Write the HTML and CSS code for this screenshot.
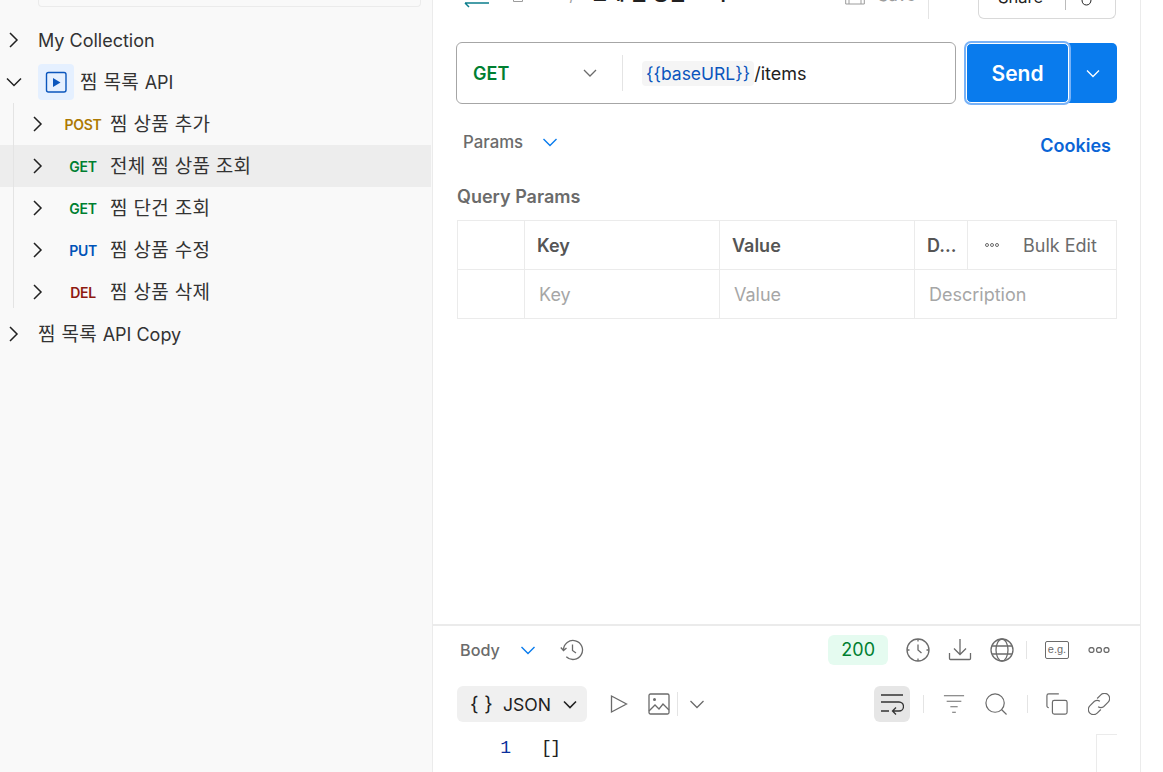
FILE: index.html
```html
<!DOCTYPE html>
<html lang="en">
<head>
    <meta charset="UTF-8">
    <title>찜 목록 API</title>
    <link rel="stylesheet" href="styles.css">
</head>
<body>
    <div class="app">
        <!-- Sidebar -->
        <aside class="sidebar">
            <div class="search-stub"></div>
            <ul class="tree">
                <li class="tree-row root">
                    <svg class="chev" viewBox="0 0 16 16"><path d="M4 1l7 7-7 7"/></svg>
                    <span class="root-name">My Collection</span>
                </li>
                <li class="tree-row root">
                    <svg class="chev" viewBox="0 0 16 16"><path d="M1 4.500l7 7 7-7"/></svg>
                    <span class="flow-badge">
                        <svg viewBox="0 0 24 24" width="24" height="24"><rect x="2.500" y="2.500" width="19.500" height="19.500" rx="2" class="flow-box"/><path d="M9 8l7.500 4.500L9 17z" class="flow-play"/></svg>
                    </span>
                    <span class="root-name kr">찜 목록 <span class="latin">API</span></span>
                </li>
                <li>
                    <ul class="children">
                        <li class="tree-row child">
                            <svg class="chev" viewBox="0 0 16 16"><path d="M4 1l7 7-7 7"/></svg>
                            <span class="method post">POST</span>
                            <span class="req-name">찜 상품 추가</span>
                        </li>
                        <li class="tree-row child selected">
                            <svg class="chev" viewBox="0 0 16 16"><path d="M4 1l7 7-7 7"/></svg>
                            <span class="method get">GET</span>
                            <span class="req-name">전체 찜 상품 조회</span>
                        </li>
                        <li class="tree-row child">
                            <svg class="chev" viewBox="0 0 16 16"><path d="M4 1l7 7-7 7"/></svg>
                            <span class="method get">GET</span>
                            <span class="req-name">찜 단건 조회</span>
                        </li>
                        <li class="tree-row child">
                            <svg class="chev" viewBox="0 0 16 16"><path d="M4 1l7 7-7 7"/></svg>
                            <span class="method put">PUT</span>
                            <span class="req-name">찜 상품 수정</span>
                        </li>
                        <li class="tree-row child">
                            <svg class="chev" viewBox="0 0 16 16"><path d="M4 1l7 7-7 7"/></svg>
                            <span class="method del">DEL</span>
                            <span class="req-name">찜 상품 삭제</span>
                        </li>
                    </ul>
                </li>
                <li class="tree-row root">
                    <svg class="chev" viewBox="0 0 16 16"><path d="M4 1l7 7-7 7"/></svg>
                    <span class="root-name kr">찜 목록 <span class="latin">API Copy</span></span>
                </li>
            </ul>
        </aside>

        <!-- Request + response -->
        <main class="workspace">
            <section class="request">
                <div class="topbar">
                    <svg class="back-icon" viewBox="0 0 26 8" width="26" height="8"><path d="M1 3h24M1 3l4 4"/></svg>
                    <svg class="crumb-icon" viewBox="0 0 10 3" width="10" height="3"><path d="M.5 0v1.500h9V0"/></svg>
                    <span class="crumb-parent">찜 목록</span>
                    <span class="crumb-sep">/</span>
                    <span class="crumb-current">전체 찜 상품 조회</span>
                    <div class="save">
                        <svg viewBox="0 0 20 22" width="20" height="22"><path d="M.7 1h18.600v20H.7zM4 1v6h12V1M4 21v-7h12v7"/></svg>
                        <span>Save</span>
                    </div>
                    <div class="top-divider"></div>
                    <div class="share">
                        <span class="share-label">Share</span>
                        <span class="share-sep"></span>
                        <svg viewBox="0 0 16 8" width="16" height="8"><path d="M3 0c0 3.500 2 5 4.500 5S12 3 12 0"/></svg>
                    </div>
                </div>

                <div class="url-row">
                    <div class="url-box">
                        <div class="method-select">
                            <span>GET</span>
                            <svg class="select-chev" viewBox="0 0 16 16" width="16" height="16"><path d="M2 5l6 6 6-6"/></svg>
                        </div>
                        <div class="url-text"><span class="var-chip">{{baseURL}}</span><span class="url-path">/items</span></div>
                    </div>
                    <div class="send-group">
                        <button class="send-btn">Send</button>
                        <button class="send-more">
                            <svg viewBox="0 0 16 16" width="16" height="16"><path d="M2 5.500l6 6 6-6"/></svg>
                        </button>
                    </div>
                </div>

                <div class="tabs-row">
                    <div class="tab-select">
                        <span>Params</span>
                        <svg viewBox="0 0 16 16" width="16" height="16"><path d="M1.500 5l6.500 6.500L14.500 5"/></svg>
                    </div>
                    <a class="cookies">Cookies</a>
                </div>

                <div class="section-title">Query Params</div>
                <div class="params-table">
                    <div class="cell"></div>
                    <div class="cell head">Key</div>
                    <div class="cell head">Value</div>
                    <div class="cell head desc-head">D...</div>
                    <div class="cell bulk">
                        <span class="dots-small">
                            <svg viewBox="0 0 16 6" width="16" height="6"><circle cx="3" cy="3" r="1.500"/><circle cx="8" cy="3" r="1.500"/><circle cx="13" cy="3" r="1.500"/></svg>
                        </span>
                        <span>Bulk Edit</span>
                    </div>
                    <div class="cell"></div>
                    <div class="cell hint">Key</div>
                    <div class="cell hint">Value</div>
                    <div class="cell hint desc-hint">Description</div>
                </div>
            </section>

            <section class="response">
                <div class="res-head">
                    <div class="tab-select body-select">
                        <span>Body</span>
                        <svg viewBox="0 0 16 16" width="16" height="16"><path d="M1.500 5l6.500 6.500L14.500 5"/></svg>
                    </div>
                    <svg class="icon history" viewBox="0 0 24 24"><path d="M3.500 12a9.500 9.500 0 1 1 2.800 6.700M.8 9.500l2.700 3 3-2.500M12.500 6.500v6l3.500 2.500"/></svg>
                    <span class="grow"></span>
                    <span class="status">200</span>
                    <svg class="icon" viewBox="0 0 24 24"><circle cx="12" cy="12" r="11"/><path d="M12 1v2.500M12 20.500V23M1 12h2.500M20.500 12H23M12 6.500V12l3.500 3"/></svg>
                    <svg class="icon" viewBox="0 0 24 24"><path d="M12 1v15M6 10.500l6 6 6-6M1.500 15v5.500a1 1 0 0 0 1 1h19a1 1 0 0 0 1-1V15"/></svg>
                    <svg class="icon" viewBox="0 0 24 24"><circle cx="12" cy="12" r="11"/><ellipse cx="12" cy="12" rx="6" ry="11"/><path d="M2 8h20M2 16h20"/></svg>
                    <span class="res-sep head-sep"></span>
                    <span class="eg-icon">e.g.</span>
                    <svg class="dots" viewBox="0 0 22 6" width="22" height="6"><circle cx="3.500" cy="3" r="2.500"/><circle cx="11" cy="3" r="2.500"/><circle cx="18.500" cy="3" r="2.500"/></svg>
                </div>

                <div class="res-tools">
                    <div class="format-select">
                        <span class="braces">{ }</span>
                        <span class="format-name">JSON</span>
                        <svg viewBox="0 0 16 16" width="16" height="16"><path d="M2 5.500l6 6 6-6"/></svg>
                    </div>
                    <svg class="tool play-icon" viewBox="0 0 22 22"><path d="M3.500 3l15 8-15 8z"/></svg>
                    <svg class="tool image-icon" viewBox="0 0 22 22"><rect x="1" y="1" width="20" height="20" rx="1.500"/><circle cx="6.500" cy="6.500" r="1.500" class="fill"/><path d="M1 18l6-6 4 4 4-5 6 6"/></svg>
                    <span class="res-sep img-sep"></span>
                    <svg class="tool more-chev" viewBox="0 0 16 16"><path d="M1.500 5l6.500 6.500L14.500 5"/></svg>
                    <span class="grow"></span>
                    <span class="wrap-btn">
                        <svg viewBox="0 0 24 24" width="24" height="24"><path class="dark" d="M1 3h22M1 10h18a4.500 4.500 0 0 1 0 9h-6M16 15.500L12.500 19l3.500 3.500M1 19h8"/></svg>
                    </span>
                    <span class="res-sep wrap-sep"></span>
                    <svg class="tool filter-icon" viewBox="0 0 24 24"><path d="M1 3h22M4 9h16M8 15h8M10 21h4"/></svg>
                    <svg class="tool spaced" viewBox="0 0 24 24"><circle cx="11" cy="11" r="10"/><path d="M18 18l5.500 5.500"/></svg>
                    <span class="res-sep spaced"></span>
                    <svg class="tool copy-icon" viewBox="0 0 24 24"><path d="M7 21V10a2 2 0 0 1 2-2h12a2 2 0 0 1 2 2v11a2 2 0 0 1-2 2H9a2 2 0 0 1-2-2zM3 16a2 2 0 0 1-2-2V3a2 2 0 0 1 2-2h11"/></svg>
                    <svg class="tool spaced" viewBox="0 0 24 24"><path d="M10 6l4-4a5.500 5.500 0 0 1 8 8l-5 5a5.500 5.500 0 0 1-6 0M14 18l-4 4a5.500 5.500 0 0 1-8-8l5-5a5.500 5.500 0 0 1 6 0"/></svg>
                </div>

                <div class="code">
                    <span class="line-no">1</span>
                    <span class="code-text">[]</span>
                    <span class="minimap"></span>
                </div>
            </section>
        </main>
    </div>
</body>
</html>
```

FILE: styles.css
```css
/* General Styles */
* {
    box-sizing: border-box;
}

html, body {
    margin: 0;
    padding: 0;
    height: 772px;
    overflow: hidden;
}

body {
    font-family: 'Inter', 'Noto Sans CJK KR', sans-serif;
    color: #212121;
    background: #fff;
}

ul {
    list-style: none;
    margin: 0;
    padding: 0;
}

svg {
    fill: none;
    stroke: currentColor;
    flex-shrink: 0;
}

.app {
    display: flex;
    height: 772px;
}

/* Sidebar */
.sidebar {
    width: 433px;
    height: 100%;
    background: #f9f9f9;
    border-right: 1px solid #ebebeb;
    flex-shrink: 0;
}

.search-stub {
    height: 7px;
    margin-left: 38px;
    width: 383px;
    border: 1px solid #ebebeb;
    border-top: none;
    border-radius: 0 0 4px 4px;
}

.tree {
    margin-top: 12px;
}

.tree-row {
    display: flex;
    align-items: center;
    height: 42px;
    color: #212121;
}

.chev {
    width: 16px;
    height: 16px;
    color: #212121;
    stroke-width: 1.5;
}

.root {
    padding-left: 6px;
}

.root-name {
    margin-left: 16px;
    font-size: 18px;
    color: #333;
}

.root-name.kr {
    font-size: 19px;
    letter-spacing: 0.3px;
    padding-bottom: 4px;
}

.latin {
    font-size: 18px;
    letter-spacing: 0;
}

.flow-badge {
    display: flex;
    align-items: center;
    justify-content: center;
    width: 36px;
    height: 36px;
    margin-left: 16px;
    border-radius: 4px;
    background: #e5f0ff;
}

.flow-box {
    stroke: #0b56bd;
    stroke-width: 1.4;
}

.flow-play {
    fill: #0b56bd;
    stroke: none;
}

.flow-badge + .root-name {
    margin-left: 6px;
}

.children {
    position: relative;
}

/* tree guide line */
.children::before {
    content: '';
    position: absolute;
    left: 13px;
    top: 0;
    bottom: 5px;
    width: 1px;
    background: #e4e4e4;
}

.child {
    width: 431px;
    padding-left: 30px;
}

.child.selected {
    background: #ededed;
}

.method {
    width: 50px;
    margin-left: 12px;
    text-align: center;
    font-size: 14px;
    font-weight: 600;
    flex-shrink: 0;
    letter-spacing: -0.3px;
}

.post { color: #ad7a03; }
.get { color: #007f31; }
.put { color: #0053b8; }
.del { color: #8e1a10; }

.req-name {
    margin-left: 2px;
    padding-bottom: 4px;
    font-size: 19px;
    letter-spacing: 0.3px;
    color: #333;
}

/* Workspace */
.workspace {
    width: 708px;
    display: flex;
    flex-direction: column;
    height: 100%;
    border-right: 1px solid #ebebeb;
    flex-shrink: 0;
}

.request {
    height: 626px;
    flex-shrink: 0;
    padding: 0 23px;
    border-bottom: 2px solid #ebebeb;
}

.topbar {
    display: flex;
    align-items: flex-start;
    height: 19px;
    overflow: hidden;
}

.back-icon {
    stroke: #0b7d8c;
    stroke-width: 1.5;
    margin-left: 8px;
}

.crumb-icon {
    margin-left: 23px;
    color: #9c9c9c;
}

.crumb-parent {
    margin: -12px 0 0 7px;
    font-size: 11px;
    line-height: 14px;
    color: #6b6b6b;
}

.crumb-sep {
    margin: -13px 0 0 6px;
    color: #9c9c9c;
    font-size: 15px;
    line-height: 18px;
}

.crumb-current {
    margin: -18px 0 0 15px;
    font-size: 19px;
    line-height: 24px;
    font-weight: 600;
    color: #212121;
}

.save {
    display: flex;
    align-items: flex-end;
    gap: 13px;
    margin: -17px 0 0 auto;
    color: #9c9c9c;
    font-size: 16.5px;
    line-height: 20px;
}

.top-divider {
    width: 1px;
    height: 19px;
    margin: 0 49px 0 12px;
    background: #e4e4e4;
}

.share {
    display: flex;
    align-items: flex-start;
    width: 138px;
    height: 19px;
    margin-right: 1px;
    padding-left: 19px;
    border: 1px solid #d9d9d9;
    border-top: none;
    border-radius: 0 0 6px 6px;
}

.share-label {
    margin-top: -13px;
    font-size: 16.5px;
    line-height: 20px;
}

.share-sep {
    width: 1px;
    height: 10px;
    margin: 0 13px 0 22px;
    background: #bbb;
}

/* URL row */
.url-row {
    display: flex;
    gap: 10px;
    margin-top: 23px;
}

.url-box {
    display: flex;
    align-items: center;
    width: 500px;
    height: 62px;
    border: 1px solid #a6a6a6;
    border-radius: 6px;
}

.method-select {
    display: flex;
    align-items: center;
    justify-content: space-between;
    width: 166px;
    height: 36px;
    padding: 0 24px 0 16px;
    border-right: 1px solid #e4e4e4;
    color: #007f31;
    font-size: 18px;
    font-weight: 600;
}

.select-chev {
    color: #6b6b6b;
    stroke-width: 1.3;
}

.url-text {
    margin-left: 19px;
    font-size: 18px;
    color: #212121;
}

.var-chip {
    padding: 2px 4px;
    color: #0b56bd;
    background: #f5f5f5;
    border-radius: 4px;
    font-size: 17.5px;
}

.send-group {
    display: flex;
}

.send-btn {
    position: relative;
    z-index: 1;
    width: 103px;
    height: 60px;
    margin-top: 1px;
    border: 1px solid #fff;
    border-radius: 5px;
    outline: 2px solid #78b2f7;
    color: #fff;
    background: #097bed;
    font-family: inherit;
    font-size: 21px;
    font-weight: 600;
}

.send-more {
    display: flex;
    align-items: center;
    justify-content: center;
    width: 48px;
    height: 60px;
    margin-top: 1px;
    padding: 0;
    border: none;
    border-radius: 0 5px 5px 0;
    color: #fff;
    background: #097bed;
    stroke-width: 1.3;
}

/* Params */
.tabs-row {
    display: flex;
    justify-content: space-between;
    align-items: center;
    height: 24px;
    margin-top: 27px;
    padding: 0 6px 0 7px;
}

.tab-select {
    display: flex;
    align-items: center;
    gap: 19px;
    margin-bottom: 2px;
    font-size: 16.8px;
    font-weight: 500;
    color: #6b6b6b;
}

.tab-select svg {
    color: #097bed;
    stroke-width: 1.4;
}

.body-select {
    gap: 20px;
    margin-bottom: 0;
    font-size: 16.2px;
}

.cookies {
    font-size: 18px;
    font-weight: 600;
    color: #0b65d6;
    margin-top: 5px;
}

.section-title {
    margin: 31px 0 14px 1px;
    height: 20px;
    font-size: 18px;
    font-weight: 600;
    color: #6b6b6b;
}

.params-table {
    display: grid;
    grid-template-columns: 67px 195px 195px 53px 149px;
    grid-template-rows: 49px 49px;
    width: 660px;
    margin-left: 1px;
    border-top: 1px solid #ebebeb;
    border-left: 1px solid #ebebeb;
    border-right: 1px solid #ebebeb;
}

.cell {
    display: flex;
    align-items: center;
    padding-left: 12px;
    border-right: 1px solid #ebebeb;
    border-bottom: 1px solid #ebebeb;
    font-size: 18px;
}

.cell:nth-child(5) {
    border-right: none;
}

.head {
    font-weight: 600;
    color: #555;
}

.bulk {
    gap: 23px;
    padding-left: 16px;
    color: #6b6b6b;
}

.dots-small {
    display: flex;
    stroke-width: 1;
}

.hint {
    padding-left: 14px;
    color: #a6a6a6;
}

.desc-hint {
    grid-column: span 2;
    border-right: none;
}

/* Response */
.response {
    flex: 1;
    padding: 0 23px;
    min-height: 0;
    overflow: hidden;
}

.res-head {
    display: flex;
    align-items: center;
    gap: 18px;
    height: 48px;
    padding: 0 7px 0 4px;
    color: #6b6b6b;
}

.grow {
    flex: 1;
}

.icon {
    width: 24px;
    height: 24px;
    stroke-width: 1.3;
    color: #6b6b6b;
}

.history {
    margin-left: 6px;
}

.status {
    padding: 0 13px;
    line-height: 30px;
    border-radius: 6px;
    background: #e5fbf0;
    color: #007f31;
    font-size: 18px;
}

.res-sep {
    width: 1px;
    height: 18px;
    background: #e4e4e4;
    flex-shrink: 0;
}

.head-sep {
    margin-left: -6px;
}

.eg-icon {
    width: 24px;
    height: 18px;
    line-height: 15px;
    border: 1.3px solid #6b6b6b;
    border-radius: 2px;
    font-family: 'Liberation Sans', sans-serif;
    font-size: 11px;
    text-align: center;
    color: #6b6b6b;
}

.dots {
    margin-left: 1px;
    stroke-width: 1.3;
    color: #6b6b6b;
}

.res-tools {
    display: flex;
    align-items: center;
    gap: 17px;
    height: 36px;
    margin-top: 12px;
    padding: 0 7px 0 1px;
}

.format-select {
    display: flex;
    align-items: center;
    gap: 9px;
    width: 130px;
    height: 36px;
    padding-left: 13px;
    border-radius: 6px;
    background: #f0f0f0;
    color: #212121;
}

.format-select svg {
    margin-left: 2px;
    stroke-width: 1.6;
}

.braces {
    width: 24px;
    font-size: 20px;
    white-space: nowrap;
}

.format-name {
    font-size: 17.6px;
}

.tool {
    width: 22px;
    height: 22px;
    stroke-width: 1.3;
    color: #6b6b6b;
}

.play-icon {
    margin-left: 4px;
}

.image-icon {
    margin-left: 1px;
}

.image-icon .fill {
    fill: #6b6b6b;
    stroke: none;
}

.img-sep {
    height: 24px;
    margin-left: -10px;
}

.more-chev {
    width: 16px;
    height: 16px;
    margin-left: -6px;
}

.wrap-btn {
    display: flex;
    align-items: center;
    justify-content: center;
    width: 36px;
    height: 36px;
    border-radius: 6px;
    background: #e6e6e6;
}

.wrap-btn .dark {
    stroke: #333;
    stroke-width: 1.3;
}

.wrap-sep {
    margin-left: -4px;
}

.filter-icon {
    margin-left: 2px;
}

.spaced {
    margin-left: 3px;
}

.copy-icon {
    margin-left: 1px;
}

.code {
    display: flex;
    position: relative;
    margin-top: 16px;
    height: 40px;
    font-family: 'Liberation Mono', monospace;
    font-size: 18px;
}

.line-no {
    width: 55px;
    text-align: right;
    color: #0a2f9c;
}

.code-text {
    margin-left: 30px;
    letter-spacing: -1.5px;
    color: #212121;
}

.minimap {
    position: absolute;
    left: 640px;
    top: -4px;
    width: 21px;
    height: 44px;
    border-left: 1px solid #ebebeb;
    border-top: 1px solid #ebebeb;
}
```
